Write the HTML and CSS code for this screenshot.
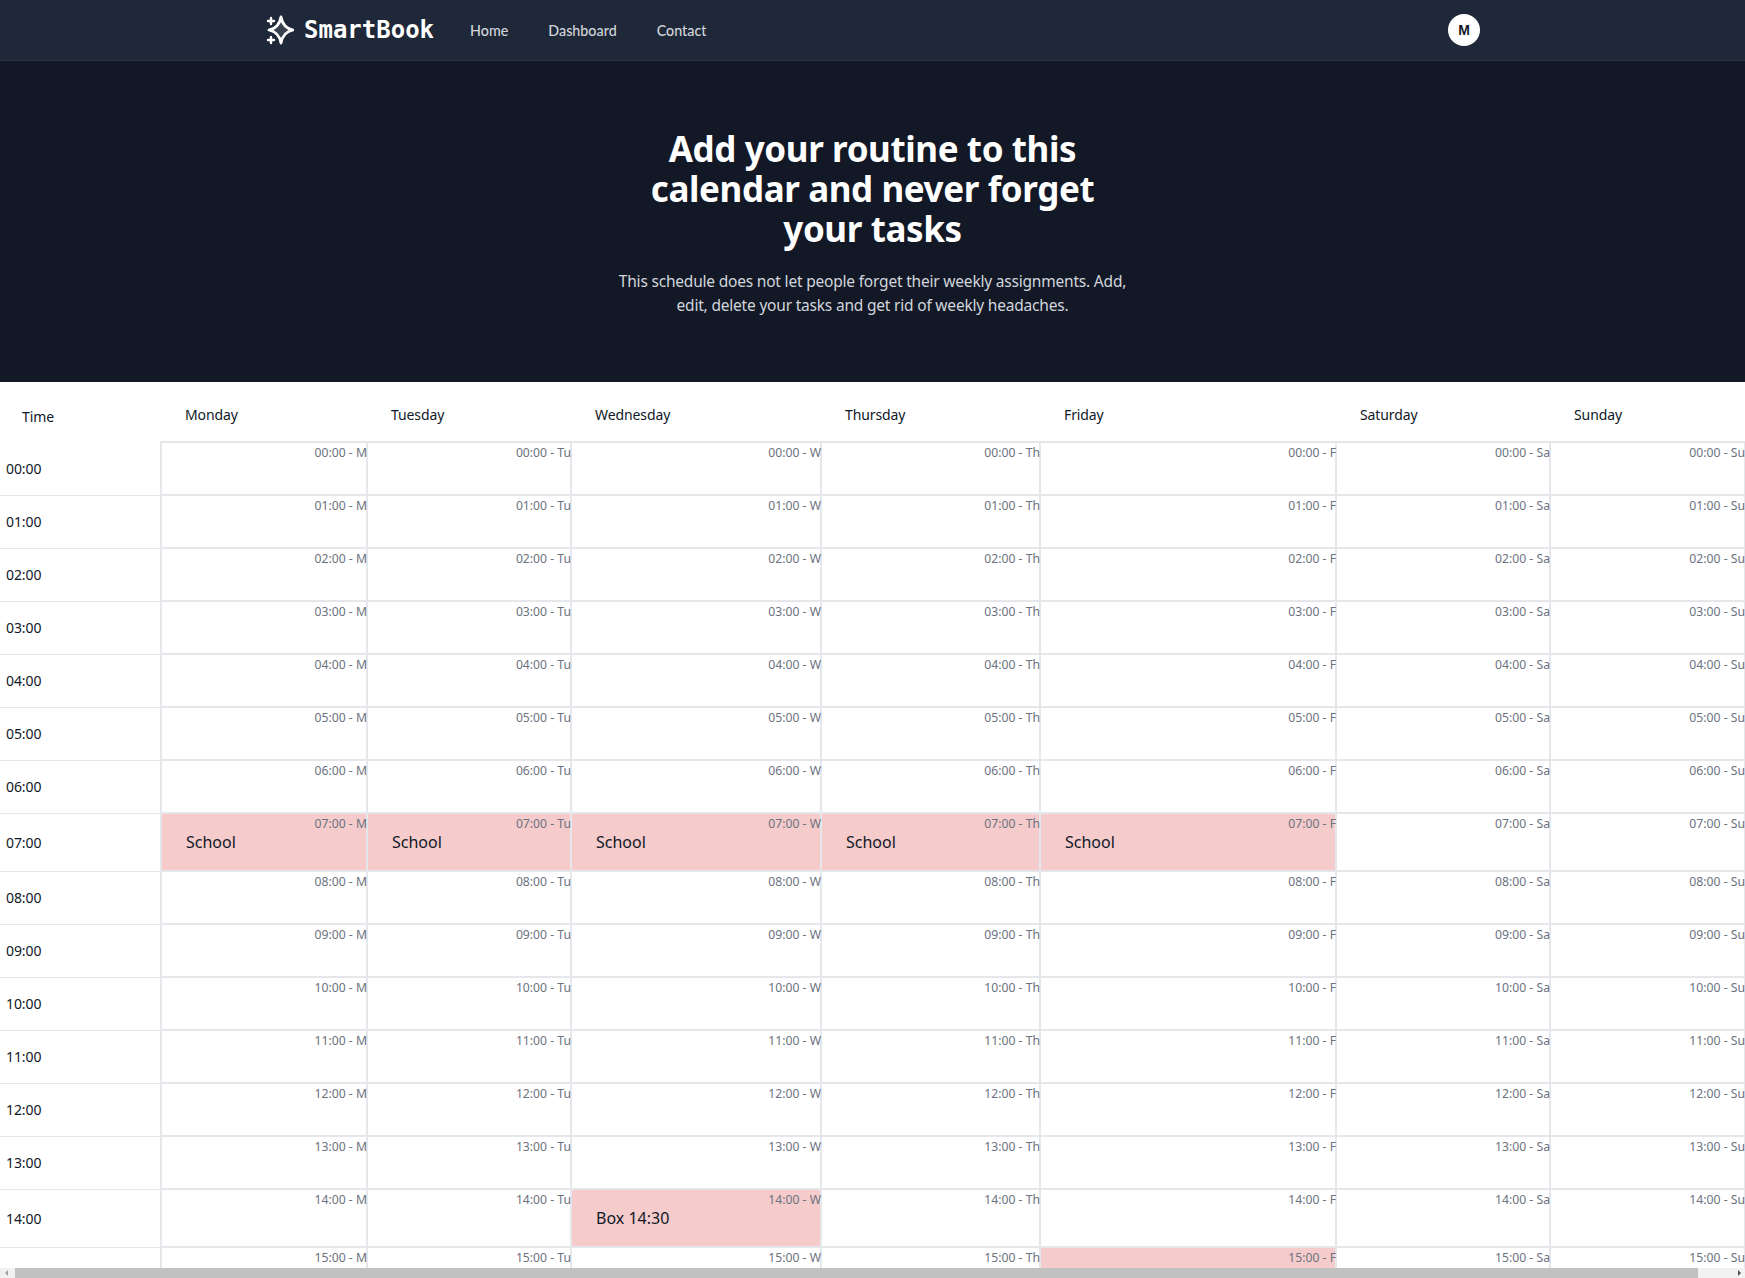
FILE: index.html
```html
<!DOCTYPE html>
<html lang="en">
<head>
<meta charset="utf-8">
<title>SmartBook</title>
<link rel="stylesheet" href="styles.css">
</head>
<body>
<header class="topbar">
  <div class="topbar-inner">
    <a class="brand">
      <svg class="brand-icon" viewBox="0 0 28 30" fill="none" stroke="#fff" stroke-linecap="round" stroke-linejoin="round"><path d="M15 2Q17 13 27 15Q17 17 15 28Q13 17 3 15Q13 13 15 2Z" fill="#39414e" stroke-width="2.800"/><path d="M5 3v6M2 6h6M5 22v6M2 25h6" stroke-width="2.400"/></svg>
      <span class="brand-name">SmartBook</span>
    </a>
    <nav class="nav">
      <a>Home</a>
      <a>Dashboard</a>
      <a>Contact</a>
    </nav>
    <span class="avatar">M</span>
  </div>
</header>
<section class="hero">
  <h1>Add your routine to this calendar and never forget your tasks</h1>
  <p>This schedule does not let people forget their weekly assignments. Add, edit, delete your tasks and get rid of weekly headaches.</p>
</section>
<main class="calendar">
  <table class="grid">
    <colgroup>
      <col class="c-time"><col class="c-mo"><col class="c-tu"><col class="c-we"><col class="c-th"><col class="c-fr"><col class="c-sa"><col class="c-su">
    </colgroup>
    <thead id="head"></thead>
    <tbody id="body"></tbody>
  </table>
</main>
<div class="hscroll">
  <span class="arrow arrow-left"></span>
  <span class="thumb"></span>
  <span class="arrow arrow-right"></span>
</div>
<script src="calendar.js"></script>
</body>
</html>
```
FILE: calendar.js
```js
var days = [["Monday","M"],["Tuesday","Tu"],["Wednesday","W"],["Thursday","Th"],["Friday","F"],["Saturday","Sa"],["Sunday","Su"]];
var events = {"7:0":"School","7:1":"School","7:2":"School","7:3":"School","7:4":"School","14:2":"Box 14:30","15:4":""};
var head = "<tr><th class='th-time'>Time</th>";
days.forEach(function(d){ head += "<th>" + d[0] + "</th>"; });
document.getElementById("head").innerHTML = head + "</tr>";
var body = "";
for (var h = 0; h < 16; h++) {
  var t = (h < 10 ? "0" : "") + h + ":00";
  var tall = (h === 7 || h === 14) ? " class='tall'" : "";
  body += "<tr" + tall + "><td class='time'>" + t + "</td>";
  days.forEach(function(d, i){
    var key = h + ":" + i;
    var has = events.hasOwnProperty(key);
    body += "<td class='slot" + (has ? " busy" : "") + "'><span class='label'>" + t + " - " + d[1] + "</span>";
    if (has && events[key]) body += "<span class='event'>" + events[key] + "</span>";
    body += "</td>";
  });
  body += "</tr>";
}
document.getElementById("body").innerHTML = body;
```
FILE: styles.css
```css
* { box-sizing: border-box; }
html, body { margin: 0; height: 100%; overflow: hidden; }
body { font-family: "Noto Sans", "Open Sans", sans-serif; background: #fff; color: #111827; }

.topbar { height: 61px; background: #1f2838; border-bottom: 1px solid #2b3646; }
.topbar-inner { width: 1223px; height: 60px; margin-left: 257px; padding: 0 0 0 9px; display: flex; align-items: center; }
.brand { display: flex; align-items: center; gap: 10px; }
.brand-icon { width: 28px; height: 30px; display: block; }
.brand-name { font-family: "DejaVu Sans Mono", monospace; font-weight: 700; font-size: 24px; color: #fff; }
.nav { display: flex; gap: 40px; margin-left: 36px; flex: 1; }
.nav a { font-family: "Lato", sans-serif; font-size: 14.300px; font-weight: 500; color: #d1d5db; }
.avatar { width: 32px; height: 32px; border-radius: 50%; background: #fff; color: #111827; font-family: "Liberation Sans", sans-serif; font-size: 14px; font-weight: 700; display: flex; align-items: center; justify-content: center; }

.hero { height: 321px; background: #121826; padding-top: 68px; text-align: center; }
.hero h1 { width: 448px; margin: 0 auto; font-size: 35px; letter-spacing: -0.4px; line-height: 40px; font-weight: 700; color: #fff; }
.hero p { width: 512px; margin: 20px auto 0; font-size: 15.500px; letter-spacing: -0.2px; line-height: 24px; color: #d1d5db; }

.calendar { background: #fff; }
.grid { width: 1745px; table-layout: fixed; border-collapse: collapse; font-size: 14px; }
.c-time { width: 161px; } .c-mo { width: 206px; } .c-tu { width: 204px; } .c-we { width: 250px; }
.c-th { width: 219px; } .c-fr { width: 296px; } .c-sa { width: 214px; } .c-su { width: 195px; }
.grid th { height: 60px; padding: 6px 0 0 24px; text-align: left; font-weight: 400; font-size: 14px; letter-spacing: -0.1px; color: #111827; }
.grid .th-time { padding: 8px 0 0 22px; }
.grid tr { height: 53px; }
.grid tr.tall { height: 58px; }
.time { padding: 0 0 0 6px; border-top: 1px solid #e5e7eb; font-size: 14px; letter-spacing: -0.1px; color: #111827; }
tbody tr:first-child .time { border-top: 0; }
.slot { position: relative; padding: 0 24px; border: 2px solid #e5e7eb; vertical-align: middle; }
.busy { background: #f5cbcb; }
.label { position: absolute; top: 2px; right: -1px; font-size: 12.200px; line-height: 16px; color: #6b7280; }
.event { font-size: 16px; color: #111827; }

.hscroll { position: fixed; left: 0; right: 0; bottom: 0; height: 10px; background: #f1f1f1; display: flex; }
.arrow { width: 15px; position: relative; }
.thumb { width: 1683px; background: #c1c1c1; }
.arrow-right { margin-left: auto; }
.arrow::after { content: ""; position: absolute; top: 2px; border: 3px solid transparent; }
.arrow-left::after { left: 2px; border-right-color: #a3a3a3; }
.arrow-right::after { right: 1px; border-left-color: #505050; }
```
